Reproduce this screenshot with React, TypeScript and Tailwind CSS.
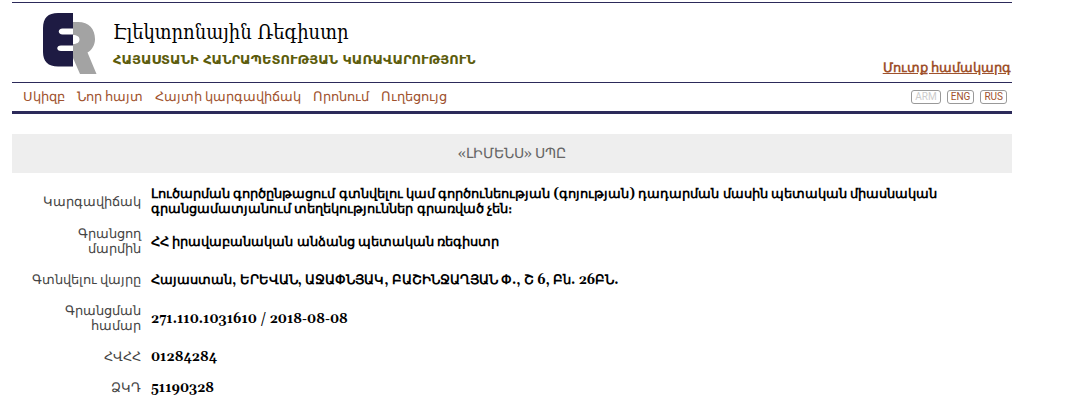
const navItems = ['Սկիզբ', 'Նոր հայտ', 'Հայտի կարգավիճակ', 'Որոնում', 'Ուղեցույց'];

const rows = [
  {
    label: 'Կարգավիճակ',
    value:
      'Լուծարման գործընթացում գտնվելու կամ գործունեության (գոյության) դադարման մասին պետական միասնական գրանցամատյանում տեղեկություններ գրառված չեն։',
  },
  { label: 'Գրանցող մարմին', value: 'ՀՀ իրավաբանական անձանց պետական ռեգիստր' },
  { label: 'Գտնվելու վայրը', value: 'Հայաստան, ԵՐԵՎԱՆ, ԱՋԱՓՆՅԱԿ, ԲԱՇԻՆՋԱՂՅԱՆ Փ., Շ 6, Բն. 26ԲՆ.' },
  { label: 'Գրանցման համար', value: '271.110.1031610 / 2018-08-08' },
  { label: 'ՀՎՀՀ', value: '01284284' },
  { label: 'ՁԿԴ', value: '51190328' },
];

function Logo() {
  return (
    <svg className="h-[62px] w-[54px] shrink-0" viewBox="0 0 54 62" aria-hidden="true">
      <path
        fill="#a3a3a3"
        d="M30 9h5c11 0 17 7 17 17 0 6-3 11-7.500 13.500L53.500 61H37L30 45V31c4 0 6.500-1.500 6.500-4.500S34 22 30 22z"
      />
      <path
        fill="#1e1b43"
        d="M15 0h15v15.500H19.500c-5 0-5 6 0 6H30v11H18c-5 0-5 5.500 0 5.500h12v15.500H15C5 53.500 0 48.500 0 39V15C0 5 5 0 15 0z"
      />
    </svg>
  );
}

export default function App() {
  return (
    <div className="bg-white px-3 pt-[2px] font-[Gelasio,serif] text-[13px] leading-[15px] text-[#444]">
      <div className="max-w-[1000px]">
        <header className="flex h-20 items-end justify-between border-t border-[#2c2a5a]">
          <div className="flex items-start gap-4 self-start pt-[10px] pl-[31px]">
            <Logo />
            <div className="pt-[5px]">
              <h1 className="font-['DejaVu_Serif_Condensed','DejaVu_Serif',serif] text-xl leading-7 text-black">Էլեկտրոնային Ռեգիստր</h1>
              <p className="pt-1 font-['DejaVu_Sans',sans-serif] text-[13px] leading-5 font-bold text-[#5c5c0c]">
                ՀԱՅԱՍՏԱՆԻ ՀԱՆՐԱՊԵՏՈՒԹՅԱՆ ԿԱՌԱՎԱՐՈՒԹՅՈՒՆ
              </p>
            </div>
          </div>
          <a href="#login" className="pr-px pb-[6px] font-bold text-[#a0522d] underline">
            Մուտք համակարգ
          </a>
        </header>
        <nav className="flex h-8 items-center justify-between border-t border-b-3 border-[#2c2a5a] pr-[5px] pl-[11px]">
          <ul className="flex gap-3">
            {navItems.map((item) => (
              <li key={item}>
                <a href="#nav" className="text-[#a0522d]">{item}</a>
              </li>
            ))}
          </ul>
          <div className="flex gap-[6px] font-[Roboto,sans-serif] text-[10px] leading-3 text-[#a0522d]">
            <button disabled className="rounded-[3px] border border-[#999] px-[3px] text-[#ccc]">ARM</button>
            <button className="rounded-[3px] border border-[#999] px-[3px]">ENG</button>
            <button className="rounded-[3px] border border-[#999] px-[3px]">RUS</button>
          </div>
        </nav>
        <main className="pt-5">
          <h2 className="bg-[#eee] pt-[13px] pb-[11px] text-center text-sm leading-[15px] text-[#666]">«ԼԻՄԵՆՍ» ՍՊԸ</h2>
          <table className="mt-[6px] w-full">
            <tbody>
              {rows.map(({ label, value }) => (
                <tr key={label} className="first:*:pb-[2px]">
                  <th scope="row" className="w-[134px] py-2 pr-[5px] pl-4 text-right align-middle font-normal">{label}</th>
                  <td className="py-2 pr-[70px] pl-[5px] align-middle font-bold text-black">{value}</td>
                </tr>
              ))}
            </tbody>
          </table>
        </main>
      </div>
    </div>
  );
}
